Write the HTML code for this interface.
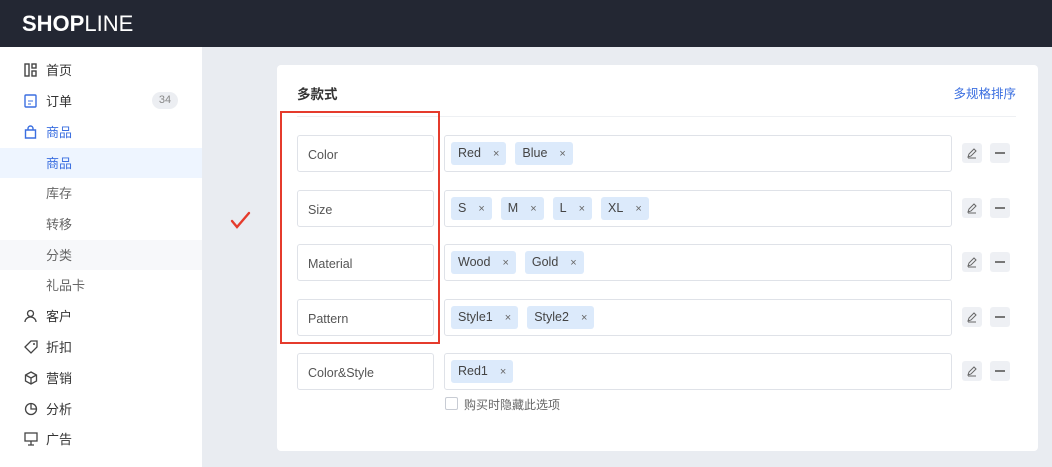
<!DOCTYPE html><html><head><meta charset="utf-8"><style>
*{box-sizing:border-box;margin:0;padding:0}
body{width:1052px;height:467px;overflow:hidden;background:#e9ecf1;font-family:"Liberation Sans","Noto Sans CJK SC",sans-serif;position:relative;color:#333}
.hd{position:absolute;left:0;top:0;width:1052px;height:47px;background:#232733}
.logo{position:absolute;left:22px;top:11px;color:#fff;font-size:22px;letter-spacing:0px}
.sb{position:absolute;left:0;top:47px;width:202px;height:420px;background:#fff}
.it{position:absolute;left:0;width:202px;height:30px;font-size:13px;line-height:31px;color:#333}
.it span{position:absolute;left:46px}
.it svg{position:absolute;left:24px;top:8px}
.card{position:absolute;left:277px;top:65px;width:761px;height:386px;background:#fff;border-radius:4px}
.inp{position:absolute;height:37px;border:1px solid #dfe2e8;border-radius:3px;background:#fff;font-size:12.5px;color:#555;line-height:38px;padding-left:10px}
.tag{display:inline-block;height:23px;line-height:23px;background:#dceafb;border-radius:3px;padding:0 7px;margin-right:9px;font-size:12.5px;color:#444}
.tag i{font-style:normal;margin-left:12px;font-size:11px;color:#666}
.tags{position:absolute;left:6px;top:6px;line-height:normal}
.btn{position:absolute;width:20px;height:20px;background:#eef0f4;border-radius:3px}
</style></head><body>
<div class="hd"><div class="logo"><b>SHOP</b>LINE</div></div>
<div class="sb"></div>
<div class="it" style="top:55px"><svg width="13" height="14"><rect x="1" y="1" width="4" height="12" fill="none" stroke="#444" stroke-width="1.4"/><rect x="8" y="1" width="4" height="4" fill="none" stroke="#444" stroke-width="1.4"/><rect x="8" y="8" width="4" height="5" fill="none" stroke="#444" stroke-width="1.4"/></svg><span>首页</span></div>
<div class="it" style="top:86px"><svg width="13" height="14"><rect x="1" y="1" width="11" height="12" rx="1" fill="none" stroke="#3b6fe0" stroke-width="1.4"/><path d="M4 7h5M4 10h3" stroke="#3b6fe0"/></svg><span>订单</span><div style="position:absolute;left:152px;top:6px;width:26px;height:17px;border-radius:9px;background:#eceef2;color:#888;font-size:11px;line-height:17px;text-align:center">34</div></div>
<div class="it" style="top:117px;color:#3b6fe0"><svg width="13" height="14"><path d="M1.5 5h10v8h-10z M4 5V3.5a2.5 2.5 0 0 1 5 0V5" fill="none" stroke="#3b6fe0" stroke-width="1.4"/></svg><span>商品</span></div>
<div class="it" style="top:148px;background:#eef5ff;color:#3b6fe0"><span>商品</span></div>
<div class="it" style="top:178px;color:#666"><span>库存</span></div>
<div class="it" style="top:209px;color:#666"><span>转移</span></div>
<div class="it" style="top:240px;color:#666;background:#f7f8fa"><span>分类</span></div>
<div class="it" style="top:270px;color:#666"><span>礼品卡</span></div>
<div class="it" style="top:301px"><svg width="13" height="14"><circle cx="6.5" cy="4.5" r="3" fill="none" stroke="#444" stroke-width="1.3"/><path d="M1 13a5.5 5 0 0 1 11 0" fill="none" stroke="#444" stroke-width="1.3"/></svg><span>客户</span></div>
<div class="it" style="top:332px"><svg width="14" height="14"><path d="M1 7L7 1h6v6l-6 6z" fill="none" stroke="#444" stroke-width="1.3"/><circle cx="10" cy="4" r="1" fill="#444"/></svg><span>折扣</span></div>
<div class="it" style="top:363px"><svg width="14" height="14"><path d="M7 1l5.5 3v6L7 13 1.5 10V4zM1.5 4L7 7l5.5-3M7 7v6" fill="none" stroke="#444" stroke-width="1.3"/></svg><span>营销</span></div>
<div class="it" style="top:394px"><svg width="14" height="14"><circle cx="7" cy="7" r="5.5" fill="none" stroke="#444" stroke-width="1.3"/><path d="M7 1.5V7h5.5" fill="none" stroke="#444" stroke-width="1.3"/></svg><span>分析</span></div>
<div class="it" style="top:424px"><svg width="14" height="14"><rect x="1" y="1" width="12" height="8" fill="none" stroke="#444" stroke-width="1.3"/><path d="M7 9v4M4 13h6" stroke="#444" stroke-width="1.3"/></svg><span>广告</span></div>

<svg style="position:absolute;left:230px;top:211px" width="22" height="20"><path d="M2 10l5 6L19 2" fill="none" stroke="#e53b2c" stroke-width="2.4" stroke-linecap="round"/></svg>

<div class="card">
<div style="position:absolute;left:20px;top:18px;font-size:13.5px;font-weight:bold;color:#333">多款式</div>
<div style="position:absolute;right:22px;top:18px;font-size:12.5px;color:#3b6fe0">多规格排序</div>
<div style="position:absolute;left:20px;right:22px;top:51px;border-top:1px solid #eef0f3"></div>
</div>

<div class="inp" style="left:297px;top:135px;width:137px">Color</div>
<div class="inp" style="left:444px;top:135px;width:508px"><div class="tags"><span class="tag">Red<i>×</i></span><span class="tag">Blue<i>×</i></span></div></div>
<div class="inp" style="left:297px;top:190px;width:137px">Size</div>
<div class="inp" style="left:444px;top:190px;width:508px"><div class="tags"><span class="tag">S<i>×</i></span><span class="tag">M<i>×</i></span><span class="tag">L<i>×</i></span><span class="tag">XL<i>×</i></span></div></div>
<div class="inp" style="left:297px;top:244px;width:137px">Material</div>
<div class="inp" style="left:444px;top:244px;width:508px"><div class="tags"><span class="tag">Wood<i>×</i></span><span class="tag">Gold<i>×</i></span></div></div>
<div class="inp" style="left:297px;top:299px;width:137px">Pattern</div>
<div class="inp" style="left:444px;top:299px;width:508px"><div class="tags"><span class="tag">Style1<i>×</i></span><span class="tag">Style2<i>×</i></span></div></div>
<div class="inp" style="left:297px;top:353px;width:137px">Color&amp;Style</div>
<div class="inp" style="left:444px;top:353px;width:508px"><div class="tags"><span class="tag">Red1<i>×</i></span></div></div>
<div style="position:absolute;left:445px;top:397px;width:13px;height:13px;border:1px solid #c8ccd4;border-radius:2px"></div>
<div style="position:absolute;left:464px;top:396px;font-size:12px;color:#666">购买时隐藏此选项</div>

<div style="position:absolute;left:280px;top:111px;width:160px;height:233px;border:2px solid #e53b2c"></div>

<div id="btns"></div>
<script>
var ys=[153,208,262,317,371],h='';
ys.forEach(function(y){h+='<div class="btn" style="left:962px;top:'+(y-10)+'px"><svg width="20" height="20"><path d="M6 14l1-3 5-5 2 2-5 5z M6 15h8" fill="none" stroke="#666" stroke-width="1"/></svg></div><div class="btn" style="left:990px;top:'+(y-10)+'px"><div style="position:absolute;left:5px;top:9px;width:10px;height:1.5px;background:#777"></div></div>';});
document.getElementById('btns').innerHTML=h;
</script>
</body></html>
